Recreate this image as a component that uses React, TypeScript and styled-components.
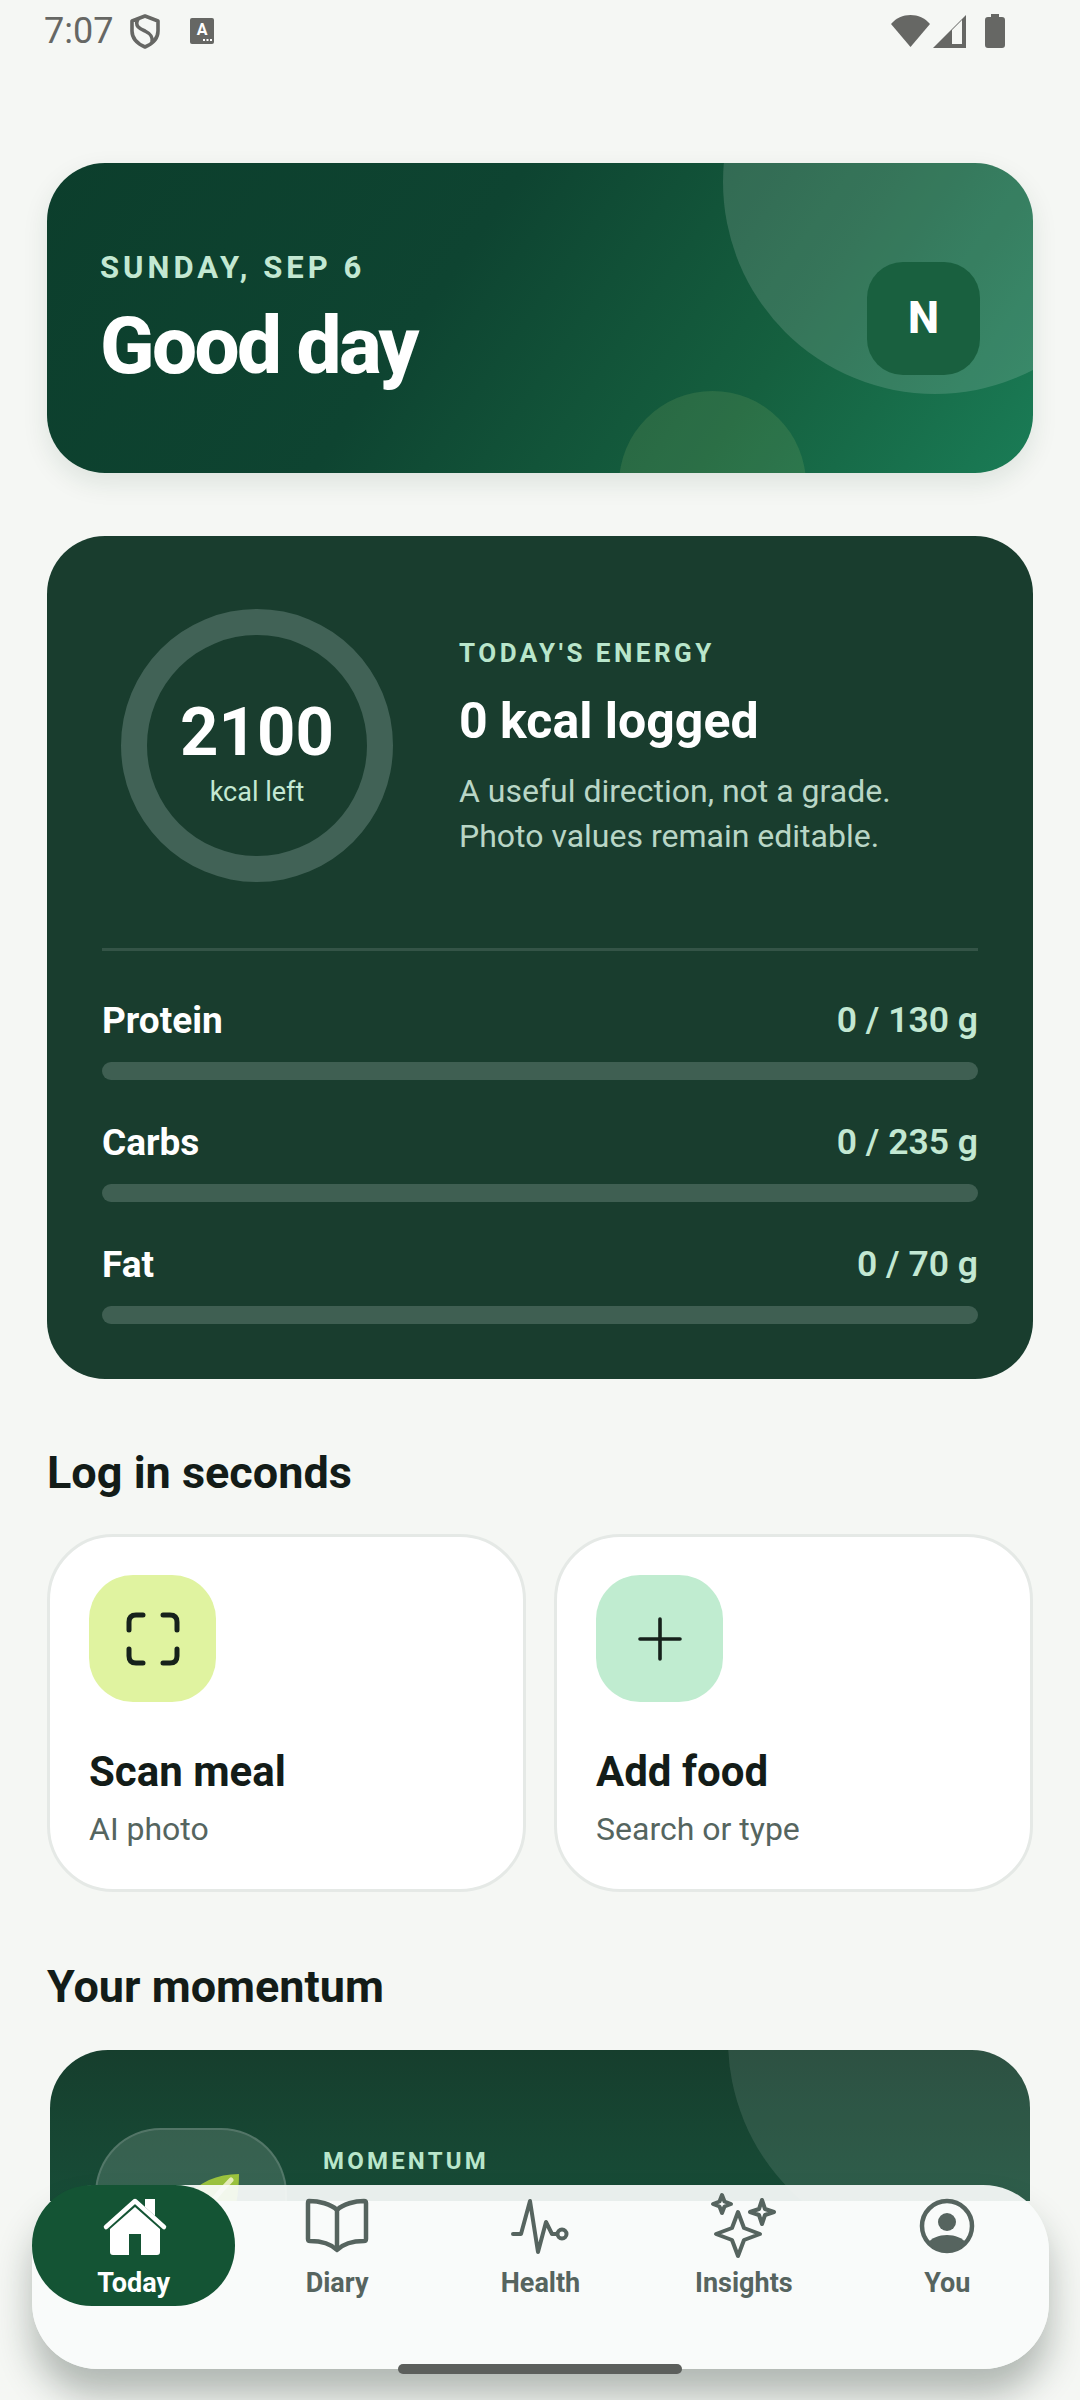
import styled, { createGlobalStyle } from 'styled-components';

const GlobalStyle = createGlobalStyle`
  html, body {
    margin: 0;
    background: #f5f7f4;
  }
  * {
    box-sizing: border-box;
  }
`;

const Page = styled.div`
  position: relative;
  width: 1080px;
  height: 2400px;
  overflow: hidden;
  background: #f5f7f4;
  font-family: Roboto, "Liberation Sans", sans-serif;
`;

const StatusBar = styled.div`
  display: flex;
  align-items: center;
  height: 62px;
  padding: 0 75px 0 44px;
  color: #666764;
`;

const Clock = styled.span`
  font-size: 36px;
  line-height: 1;
  margin-right: 17px;
`;

const StatusIcon = styled.svg<{ $gap?: number }>`
  display: block;
  flex: none;
  margin-left: ${(p) => p.$gap ?? 0}px;
`;

const Spacer = styled.div`
  flex: 1;
`;

const Scroll = styled.main`
  height: 2139px;
  overflow: hidden;
  padding: 101px 47px 0;
`;

const Hero = styled.section`
  position: relative;
  display: flex;
  align-items: center;
  justify-content: space-between;
  height: 310px;
  padding: 0 53px;
  border-radius: 58px;
  overflow: hidden;
  background: linear-gradient(125deg, #0c3e2c 0%, #0e4431 40%, #15603f 72%, #1a7c56 100%);
`;

const HeroWrap = styled.div`
  border-radius: 58px;
  box-shadow: 0 10px 26px rgba(20, 60, 40, 0.1);
`;

const Bubble = styled.div<{ $left: number; $top: number; $size: number; $color: string }>`
  position: absolute;
  left: ${(p) => p.$left}px;
  top: ${(p) => p.$top}px;
  width: ${(p) => p.$size}px;
  height: ${(p) => p.$size}px;
  border-radius: 50%;
  background: ${(p) => p.$color};
`;

const HeroText = styled.div`
  position: relative;
  padding-top: 2px;
`;

const HeroDate = styled.div`
  font-size: 31px;
  line-height: 36px;
  font-weight: 700;
  letter-spacing: 4px;
  color: #c3e8d2;
`;

const HeroTitle = styled.h1`
  margin: 18px 0 0;
  font-size: 80px;
  line-height: 84px;
  font-weight: 800;
  letter-spacing: -2.6px;
  color: #ffffff;
`;

const Avatar = styled.div`
  position: relative;
  display: flex;
  align-items: center;
  justify-content: center;
  width: 113px;
  height: 113px;
  border-radius: 36px;
  background: #19603f;
  color: #ffffff;
  font-size: 44px;
  font-weight: 800;
`;

const EnergyCard = styled.section`
  margin-top: 63px;
  padding: 73px 55px 55px;
  border-radius: 58px;
  background: #193d2e;
`;

const EnergyTop = styled.div`
  display: flex;
  align-items: center;
  gap: 66px;
  padding: 0 0 66px 19px;
  border-bottom: 3px solid rgba(255, 255, 255, 0.12);
`;

const Ring = styled.div`
  display: flex;
  flex: none;
  flex-direction: column;
  align-items: center;
  justify-content: center;
  width: 272px;
  height: 273px;
  padding-top: 10px;
  border: 26px solid #416256;
  border-radius: 50%;
`;

const RingValue = styled.div`
  font-size: 67px;
  line-height: 76px;
  font-weight: 700;
  color: #ffffff;
`;

const RingLabel = styled.div`
  margin-top: 6px;
  font-size: 27px;
  line-height: 32px;
  color: #c3e8d2;
`;

const EnergyText = styled.div`
  display: flex;
  flex-direction: column;
  padding-top: 6px;
`;

const Eyebrow = styled.div`
  font-size: 26px;
  line-height: 30px;
  font-weight: 700;
  letter-spacing: 3.5px;
  color: #b9e6cb;
`;

const EnergyTitle = styled.div`
  margin-top: 25px;
  font-size: 50px;
  line-height: 56px;
  font-weight: 700;
  color: #ffffff;
`;

const EnergyNote = styled.div`
  margin-top: 20px;
  font-size: 32px;
  line-height: 45px;
  color: #b9d6c6;
`;

const Macros = styled.div`
  display: flex;
  flex-direction: column;
  gap: 40px;
  margin-top: 47px;
`;

const MacroHead = styled.div`
  display: flex;
  align-items: center;
  justify-content: space-between;
  height: 44px;
`;

const MacroName = styled.span`
  font-size: 37px;
  font-weight: 700;
  color: #ffffff;
`;

const MacroValue = styled.span`
  font-size: 35.500px;
  font-weight: 600;
  color: #c3e8d2;
`;

const Track = styled.div`
  height: 18px;
  margin-top: 20px;
  border-radius: 9px;
  background: #3f5f52;
`;

const SectionTitle = styled.h2<{ $top: number }>`
  margin: ${(p) => p.$top}px 0 0;
  font-size: 45px;
  line-height: 56px;
  font-weight: 700;
  color: #131c18;
`;

const Actions = styled.div`
  display: grid;
  grid-template-columns: 1fr 1fr;
  gap: 28px;
  margin-top: 33px;
`;

const ActionCard = styled.div`
  height: 358px;
  padding: 38px 39px;
  border: 3px solid #e5e9e6;
  border-radius: 66px;
  background: #ffffff;
`;

const ActionIcon = styled.div<{ $bg: string }>`
  display: flex;
  align-items: center;
  justify-content: center;
  width: 127px;
  height: 127px;
  border-radius: 44px;
  background: ${(p) => p.$bg};
`;

const ActionTitle = styled.div`
  margin-top: 45px;
  font-size: 42px;
  line-height: 50px;
  font-weight: 700;
  color: #131c18;
`;

const ActionSub = styled.div`
  margin-top: 12px;
  font-size: 32px;
  line-height: 40px;
  color: #55655f;
`;

const MomentumCard = styled.section`
  position: relative;
  display: flex;
  align-items: flex-start;
  gap: 36px;
  height: 400px;
  margin: 35px 3px 0;
  padding: 78px 45px;
  border-radius: 58px;
  overflow: hidden;
  background: linear-gradient(180deg, #163e2d 0%, #1a6448 100%);
`;

const LeafBox = styled.div`
  position: relative;
  display: flex;
  flex: none;
  align-items: center;
  justify-content: center;
  width: 192px;
  height: 192px;
  border: 2px solid rgba(255, 255, 255, 0.14);
  border-radius: 66px;
  background: rgba(255, 255, 255, 0.14);
`;

const MomentumLabel = styled.div`
  position: relative;
  margin-top: 18px;
  font-size: 24px;
  line-height: 30px;
  font-weight: 700;
  letter-spacing: 3.2px;
  color: #b9e6cb;
`;

const Nav = styled.nav`
  position: absolute;
  left: 32px;
  top: 2185px;
  display: grid;
  grid-template-columns: repeat(5, 1fr);
  align-items: start;
  width: 1017px;
  height: 184px;
  border-radius: 66px;
  background: rgba(249, 251, 250, 0.93);
  box-shadow: 0 26px 36px rgba(20, 35, 28, 0.3);
`;

const NavItem = styled.div<{ $active?: boolean }>`
  display: flex;
  flex-direction: column;
  align-items: center;
  height: 121px;
  padding-top: 12px;
  border-radius: 60px;
  background: ${(p) => (p.$active ? '#145434' : 'transparent')};
  color: ${(p) => (p.$active ? '#ffffff' : '#56645f')};
`;

const NavGlyph = styled.svg`
  display: block;
  width: 72px;
  height: 60px;
  overflow: visible;
`;

const NavLabel = styled.span`
  margin-top: 9px;
  font-size: 27px;
  line-height: 34px;
  font-weight: 700;
`;

const Handle = styled.div`
  position: absolute;
  left: 398px;
  top: 2364px;
  width: 284px;
  height: 10px;
  border-radius: 5px;
  background: #5c5f5c;
`;

const macros = [
  { name: 'Protein', value: '0 / 130 g' },
  { name: 'Carbs', value: '0 / 235 g' },
  { name: 'Fat', value: '0 / 70 g' },
];

const star = (cx: number, cy: number, r: number, w: number) =>
  `M${cx} ${cy - r}L${cx + w} ${cy - w}L${cx + r} ${cy}L${cx + w} ${cy + w}L${cx} ${cy + r}L${cx - w} ${cy + w}L${cx - r} ${cy}L${cx - w} ${cy - w}Z`;

const App = () => {
  return (
    <Page>
      <GlobalStyle />
      <StatusBar>
        <Clock>7:07</Clock>
        <StatusIcon width="30" height="35" viewBox="0 0 30 35" fill="none" stroke="currentColor">
          <path d="M15 2L28 7V17C28 25 22 30 15 33C8 30 2 25 2 17V7Z" strokeWidth="3.6" strokeLinejoin="round" />
          <path d="M8 5C4 12 10 15 15 17C21 20 23 23 22 28" strokeWidth="3.6" />
        </StatusIcon>
        <StatusIcon $gap={30} width="24" height="26" viewBox="0 0 24 26">
          <rect width="24" height="26" rx="2" fill="currentColor" />
          <text x="12" y="17" textAnchor="middle" fontSize="16" fontWeight="700" fill="#ffffff" fontFamily="Roboto">A</text>
          <path d="M13 22h2M16.500 22h2M20 22h2" stroke="#ffffff" strokeWidth="2" />
        </StatusIcon>
        <Spacer />
        <StatusIcon width="39" height="32" viewBox="0 0 39 32" fill="currentColor">
          <path d="M0 9C5 3 12 0 19.500 0S34 3 39 9L19.500 32Z" />
        </StatusIcon>
        <StatusIcon $gap={3} width="33" height="33" viewBox="0 0 33 33">
          <path fillRule="evenodd" fill="currentColor" d="M33 0V33H0ZM19 15L19 29H29V5Z" />
        </StatusIcon>
        <StatusIcon $gap={19} width="20" height="34" viewBox="0 0 20 34" fill="currentColor">
          <path d="M6 0H14V3H17Q20 3 20 6V31Q20 34 17 34H3Q0 34 0 31V6Q0 3 3 3H6Z" />
        </StatusIcon>
      </StatusBar>

      <Scroll>
        <HeroWrap>
          <Hero>
            <Bubble $left={676} $top={-193} $size={424} $color="rgba(255, 255, 255, 0.14)" />
            <Bubble $left={572} $top={228} $size={187} $color="rgba(190, 220, 120, 0.13)" />
            <HeroText>
              <HeroDate>SUNDAY, SEP 6</HeroDate>
              <HeroTitle>Good day</HeroTitle>
            </HeroText>
            <Avatar>N</Avatar>
          </Hero>
        </HeroWrap>

        <EnergyCard>
          <EnergyTop>
            <Ring>
              <RingValue>2100</RingValue>
              <RingLabel>kcal left</RingLabel>
            </Ring>
            <EnergyText>
              <Eyebrow>TODAY'S ENERGY</Eyebrow>
              <EnergyTitle>0 kcal logged</EnergyTitle>
              <EnergyNote>
                A useful direction, not a grade.
                <br />
                Photo values remain editable.
              </EnergyNote>
            </EnergyText>
          </EnergyTop>
          <Macros>
            {macros.map((m) => (
              <div key={m.name}>
                <MacroHead>
                  <MacroName>{m.name}</MacroName>
                  <MacroValue>{m.value}</MacroValue>
                </MacroHead>
                <Track />
              </div>
            ))}
          </Macros>
        </EnergyCard>

        <SectionTitle $top={66}>Log in seconds</SectionTitle>
        <Actions>
          <ActionCard>
            <ActionIcon $bg="#e0f3a0">
              <svg width="54" height="54" viewBox="0 0 54 54" fill="none" stroke="#16211b" strokeWidth="5" strokeLinecap="round">
                <path d="M3 18V10Q3 3 10 3H17" />
                <path d="M37 3H44Q51 3 51 10V18" />
                <path d="M51 37V44Q51 51 44 51H37" />
                <path d="M17 51H10Q3 51 3 44V37" />
              </svg>
            </ActionIcon>
            <ActionTitle>Scan meal</ActionTitle>
            <ActionSub>AI photo</ActionSub>
          </ActionCard>
          <ActionCard>
            <ActionIcon $bg="#c0ecd0">
              <svg width="44" height="44" viewBox="0 0 44 44" fill="none" stroke="#16211b" strokeWidth="3.600" strokeLinecap="round">
                <path d="M22 2V42M2 22H42" />
              </svg>
            </ActionIcon>
            <ActionTitle>Add food</ActionTitle>
            <ActionSub>Search or type</ActionSub>
          </ActionCard>
        </Actions>

        <SectionTitle $top={67}>Your momentum</SectionTitle>
        <MomentumCard>
          <Bubble $left={678} $top={-222} $size={424} $color="rgba(255, 255, 255, 0.1)" />
          <LeafBox>
            <svg width="104" height="104" viewBox="0 0 104 104">
              <path d="M100 2C78 2 60 10 46 26C26 48 20 72 34 90C60 100 100 70 100 2Z" fill="#9cc43e" />
              <path d="M40 84C50 60 70 30 92 8" stroke="#e7eebc" strokeWidth="5" fill="none" strokeLinecap="round" />
            </svg>
          </LeafBox>
          <MomentumLabel>MOMENTUM</MomentumLabel>
        </MomentumCard>
      </Scroll>

      <Nav>
        <NavItem $active>
          <NavGlyph viewBox="0 0 72 60" fill="currentColor">
            <path d="M47 2H57V19L47 10Z" />
            <path d="M37 10L62 32V55Q62 58 59 58H43V37H31V58H15Q12 58 12 55V32Z" />
            <path d="M8 30L37 4L66 30" fill="none" stroke="currentColor" strokeWidth="4.500" strokeLinecap="round" strokeLinejoin="round" />
          </NavGlyph>
          <NavLabel>Today</NavLabel>
        </NavItem>
        <NavItem>
          <NavGlyph viewBox="0 0 72 60" fill="none" stroke="currentColor" strokeWidth="4.500" strokeLinejoin="round">
            <path d="M36 13C30 7 18 4 8 4Q7 4 7 6V42Q7 44 9 44C20 44 30 47 36 53C42 47 52 44 63 44Q65 44 65 42V6Q65 4 63 4C54 4 42 7 36 13Z" />
            <path d="M36 13V53" />
          </NavGlyph>
          <NavLabel>Diary</NavLabel>
        </NavItem>
        <NavItem>
          <NavGlyph viewBox="0 0 72 60" fill="none" stroke="currentColor" strokeWidth="4" strokeLinejoin="round" strokeLinecap="round">
            <path d="M9 37H17L26 4L34 55L42 25L48 37H53" />
            <circle cx="58" cy="37" r="4.500" />
          </NavGlyph>
          <NavLabel>Health</NavLabel>
        </NavItem>
        <NavItem>
          <NavGlyph viewBox="0 0 72 60" fill="none" stroke="currentColor" strokeWidth="4" strokeLinejoin="round">
            <path d={star(30, 37, 22, 6)} />
            <path d={star(14, 7, 9, 2.5)} />
            <path d={star(54, 15, 12, 3)} />
          </NavGlyph>
          <NavLabel>Insights</NavLabel>
        </NavItem>
        <NavItem>
          <NavGlyph viewBox="0 0 72 60" fill="none">
            <circle cx="36" cy="29" r="25" stroke="currentColor" strokeWidth="4.500" />
            <circle cx="36" cy="25" r="9" fill="currentColor" />
            <path d="M17 46C20 41 28 38 36 38C44 38 52 41 55 46C50 51 43 54 36 54C29 54 22 51 17 46Z" fill="currentColor" />
          </NavGlyph>
          <NavLabel>You</NavLabel>
        </NavItem>
      </Nav>
      <Handle />
    </Page>
  );
};

export default App;
